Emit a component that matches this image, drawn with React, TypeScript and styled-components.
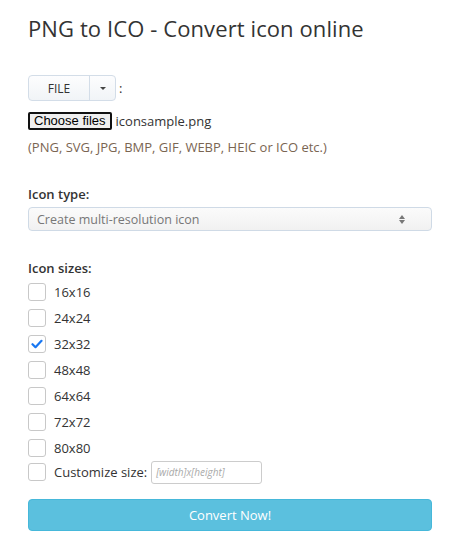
import React from "react";
import styled, { createGlobalStyle } from "styled-components";

const Global = createGlobalStyle`
  html, body { margin: 0; padding: 0; background: #fff; }
  body { font-family: "Open Sans", "Noto Sans", sans-serif; color: #333; }
  * { box-sizing: border-box; }
`;

const Page = styled.div`
  width: 450px;
  padding: 13px 18px 0 28px;
  display: flex;
  flex-direction: column;
`;

const Title = styled.h1`
  margin: 0;
  font-size: 22px;
  font-weight: 400;
  line-height: 30px;
  color: #333;
  letter-spacing: 0.1px;
`;

const FileRow = styled.div`
  margin-top: 32px;
  display: flex;
  align-items: center;
  gap: 3px;
  font-size: 13px;
`;

const BtnGroup = styled.div`
  display: flex;
  height: 26px;
  border: 1px solid #d3dde8;
  border-radius: 4px;
  background: linear-gradient(#fdfdfe, #f1f4f7);
  overflow: hidden;
`;

const GroupBtn = styled.div<{ $w: number; $divider?: boolean }>`
  width: ${(p) => p.$w}px;
  display: flex;
  align-items: center;
  justify-content: center;
  font-size: 12px;
  font-weight: 500;
  color: #333;
  border-left: ${(p) => (p.$divider ? "1px solid #d3dde8" : "none")};
`;

const Caret = styled.span`
  width: 0;
  height: 0;
  border-left: 3px solid transparent;
  border-right: 3px solid transparent;
  border-top: 3px solid #444;
`;

const ChooseRow = styled.div`
  margin-top: 11px;
  display: flex;
  align-items: center;
  gap: 4px;
  font-size: 13px;
  color: #333;
`;

const ChooseBtn = styled.div`
  height: 18px;
  padding: 0 4px;
  border: 2px solid #111;
  border-radius: 2px;
  background: #efefef;
  font-family: "Liberation Sans", Arial, sans-serif;
  font-size: 13px;
  line-height: 14px;
  color: #000;
  display: flex;
  align-items: center;
`;

const Hint = styled.div`
  margin-top: 7px;
  font-size: 13px;
  line-height: 20px;
  color: #7a6552;
`;

const Label = styled.div<{ $mt: number }>`
  margin-top: ${(p) => p.$mt}px;
  font-size: 13px;
  font-weight: 600;
  line-height: 20px;
  color: #333;
`;

const Select = styled.div`
  margin-top: 3px;
  height: 24px;
  width: 404px;
  border: 1px solid #cfdae6;
  border-radius: 4px;
  background: linear-gradient(#fbfbfb, #f1f1f1);
  display: flex;
  align-items: center;
  justify-content: space-between;
  padding: 0 26px 0 8px;
  font-size: 12.5px;
  color: #777;
`;

const Arrows = styled.div`
  display: flex;
  flex-direction: column;
  gap: 1px;
`;

const Tri = styled.span<{ $up?: boolean }>`
  width: 0;
  height: 0;
  border-left: 3px solid transparent;
  border-right: 3px solid transparent;
  ${(p) => (p.$up ? "border-bottom: 4px solid #777;" : "border-top: 4px solid #777;")}
`;

const SizeList = styled.div`
  margin-top: 1px;
  display: flex;
  flex-direction: column;
`;

const SizeRow = styled.label<{ $h: number }>`
  height: ${(p) => p.$h}px;
  display: flex;
  align-items: center;
  gap: 8px;
  font-size: 13px;
  color: #333;
`;

const Box = styled.span`
  width: 18px;
  height: 18px;
  border: 1px solid #c8c8c8;
  border-radius: 3px;
  background: #fff;
  display: flex;
  align-items: center;
  justify-content: center;
  flex: none;
`;

const CustomInput = styled.div`
  margin-left: -4px;
  width: 111px;
  height: 23px;
  border: 1px solid #ccc;
  border-radius: 3px;
  display: flex;
  align-items: center;
  padding-left: 4px;
  font-size: 10px;
  font-style: italic;
  color: #aaa;
`;

const Convert = styled.div`
  margin-top: 15px;
  width: 404px;
  height: 32px;
  background: #5bc0de;
  border: 1px solid #46b8da;
  border-radius: 4px;
  color: #fff;
  font-size: 13px;
  display: flex;
  align-items: center;
  justify-content: center;
`;

const sizes = ["16x16", "24x24", "32x32", "48x48", "64x64", "72x72", "80x80"];

export default function App() {
  return (
    <>
      <Global />
      <Page>
        <Title>PNG to ICO - Convert icon online</Title>
        <FileRow>
          <BtnGroup>
            <GroupBtn $w={60}>FILE</GroupBtn>
            <GroupBtn $w={26} $divider>
              <Caret />
            </GroupBtn>
          </BtnGroup>
          <span>:</span>
        </FileRow>
        <ChooseRow>
          <ChooseBtn>Choose files</ChooseBtn>
          <span>iconsample.png</span>
        </ChooseRow>
        <Hint>(PNG, SVG, JPG, BMP, GIF, WEBP, HEIC or ICO etc.)</Hint>
        <Label $mt={27}>Icon type:</Label>
        <Select>
          <span>Create multi-resolution icon</span>
          <Arrows>
            <Tri $up />
            <Tri />
          </Arrows>
        </Select>
        <Label $mt={27}>Icon sizes:</Label>
        <SizeList>
          {sizes.map((s, i) => (
            <SizeRow key={s} $h={i === 6 ? 25 : 26}>
              <Box>
                {s === "32x32" && (
                  <svg width="12" height="10" viewBox="0 0 12 10">
                    <path d="M1.5 5.2 L4.5 8.2 L10.5 1.8" fill="none" stroke="#1877f2" strokeWidth="2.2" strokeLinecap="round" strokeLinejoin="round" />
                  </svg>
                )}
              </Box>
              <span>{s}</span>
            </SizeRow>
          ))}
          <SizeRow $h={24}>
            <Box />
            <span>Customize size:</span>
            <CustomInput>[width]x[height]</CustomInput>
          </SizeRow>
        </SizeList>
        <Convert>Convert Now!</Convert>
      </Page>
    </>
  );
}
